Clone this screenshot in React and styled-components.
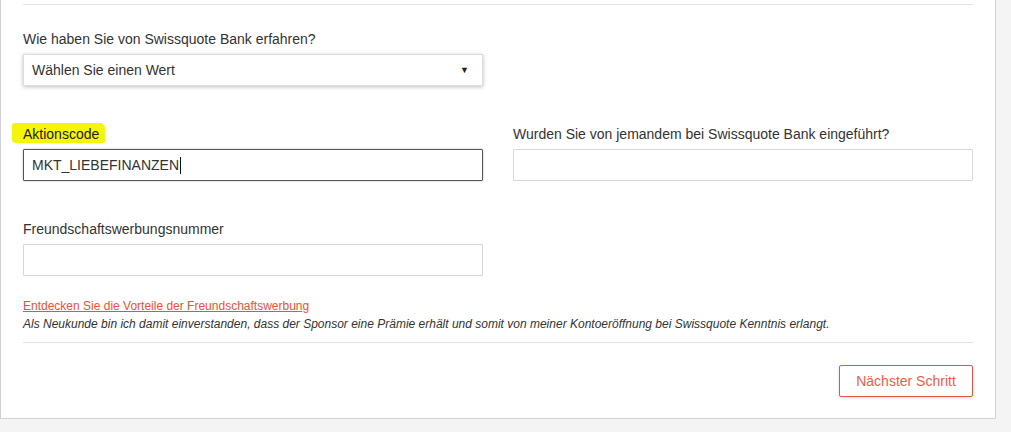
import styled, { createGlobalStyle } from 'styled-components'

const GlobalStyle = createGlobalStyle`
    body {
        margin: 0;
        background: #f4f4f4;
        font-family: 'Liberation Sans', Arial, sans-serif;
        color: #333;
    }
`;

const App = () => {
    return (
        <>
            <GlobalStyle />
            <Panel>
                <Divider />
                <Row>
                    <Field>
                        <Label>Wie haben Sie von Swissquote Bank erfahren?</Label>
                        <Select>
                            <span>Wählen Sie einen Wert</span>
                            <Caret>▼</Caret>
                        </Select>
                    </Field>
                </Row>
                <Row>
                    <Field>
                        <Label><Marker>Aktionscode</Marker></Label>
                        <Input focused>MKT_LIEBEFINANZEN<Cursor /></Input>
                    </Field>
                    <Field>
                        <Label>Wurden Sie von jemandem bei Swissquote Bank eingeführt?</Label>
                        <Input />
                    </Field>
                </Row>
                <Row>
                    <Field>
                        <Label>Freundschaftswerbungsnummer</Label>
                        <Input />
                    </Field>
                </Row>
                <Notes>
                    <Link href="#">Entdecken Sie die Vorteile der Freundschaftswerbung</Link>
                    <Note>Als Neukunde bin ich damit einverstanden, dass der Sponsor eine Prämie erhält und somit von meiner Kontoeröffnung bei Swissquote Kenntnis erlangt.</Note>
                </Notes>
                <Divider />
                <Footer>
                    <NextButton>Nächster Schritt</NextButton>
                </Footer>
            </Panel>
        </>
    )
};

const Panel = styled.div`
    box-sizing: border-box;
    width: 996px;
    height: 419px;
    background: #fff;
    border: 1px solid #d2d2d2;
    border-top: none;
    padding: 4px 22px 0 22px;
    display: flex;
    flex-direction: column;
`;

const Divider = styled.div`
    height: 1px;
    background: #e3e3e3;
    width: 100%;
`;

const Row = styled.div`
    display: grid;
    grid-template-columns: 460px 460px;
    column-gap: 30px;
    margin-top: 24px;
    & + &{
        margin-top: 38px;
    }
`;

const Field = styled.div`
    display: flex;
    flex-direction: column;
`;

const Label = styled.label`
    font-size: 14px;
    line-height: 20px;
    margin-bottom: 5px;
    color: #333;
`;

const Marker = styled.span`
    background: #f5f50a;
    padding: 3px 6px 1px 11px;
    margin-left: -11px;
    border-radius: 3px 5px 2px 4px;
    color: #222;
`;

const Select = styled.div`
    box-sizing: border-box;
    height: 32px;
    border: 1px solid #dcdcdc;
    box-shadow: 0 1px 4px rgba(0,0,0,0.25);
    display: flex;
    align-items: center;
    justify-content: space-between;
    padding: 0 13px 0 8px;
    font-size: 14px;
    color: #333;
`;

const Caret = styled.span`
    font-size: 9px;
    color: #222;
`;

const Input = styled.div`
    box-sizing: border-box;
    height: 32px;
    border: 1px solid ${p => p.focused ? '#555' : '#d8d8d8'};
    box-shadow: ${p => p.focused ? '0 0 2px rgba(0,0,0,0.3)' : 'none'};
    border-radius: 1px;
    display: flex;
    align-items: center;
    padding: 0 8px;
    font-size: 14px;
    color: #333;
`;

const Cursor = styled.span`
    display: inline-block;
    width: 1px;
    height: 17px;
    background: #111;
    margin-left: 1px;
`;

const Notes = styled.div`
    display: flex;
    flex-direction: column;
    margin-top: 22px;
    padding-bottom: 10px;
`;

const Link = styled.a`
    font-size: 12px;
    line-height: 16px;
    color: #e8513a;
    text-decoration: underline;
`;

const Note = styled.p`
    margin: 3px 0 0;
    font-size: 12px;
    line-height: 15px;
    font-style: italic;
    color: #333;
`;

const Footer = styled.div`
    display: flex;
    justify-content: flex-end;
    margin-top: 22px;
`;

const NextButton = styled.button`
    box-sizing: border-box;
    height: 32px;
    width: 134px;
    border: 1px solid #e1573f;
    border-radius: 2px;
    background: #fff;
    color: #e8604a;
    font-family: 'Liberation Sans', Arial, sans-serif;
    font-size: 14px;
    box-shadow: 0 1px 3px rgba(0,0,0,0.15);
`;

export default App;
